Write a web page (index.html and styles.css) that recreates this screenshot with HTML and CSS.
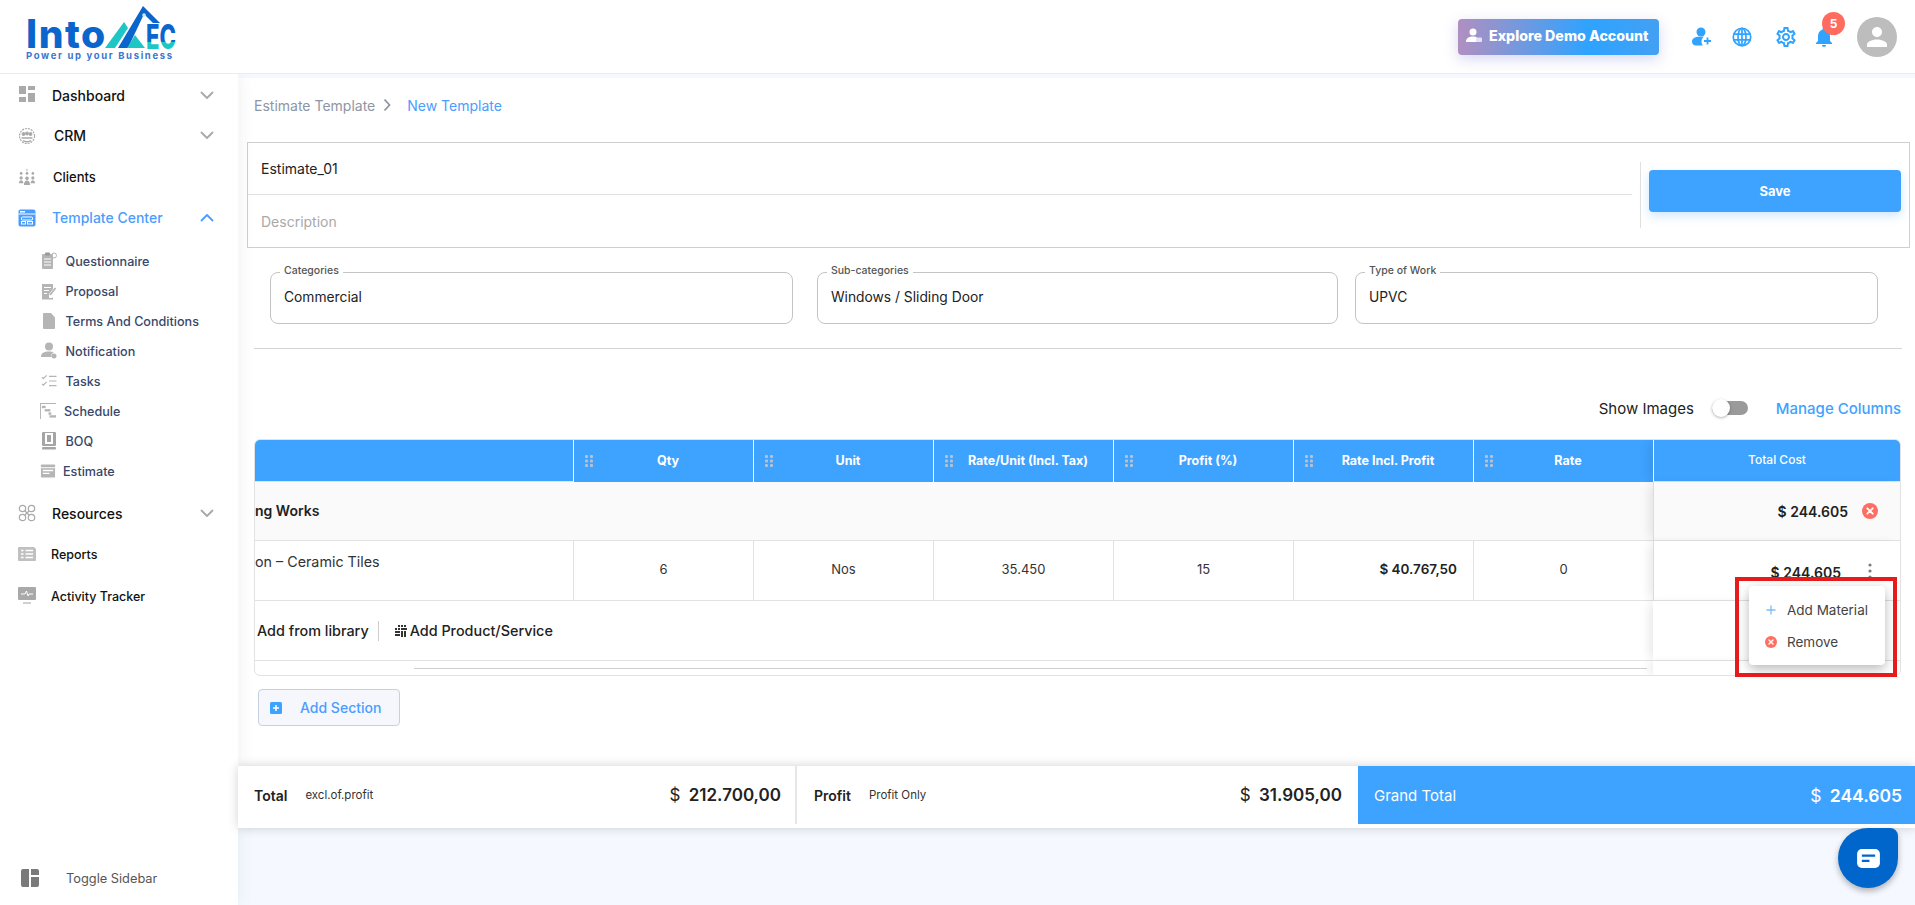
FILE: index.html
```html
<!DOCTYPE html>
<html lang="en">
<head>
<meta charset="utf-8">
<title>New Template</title>
<link rel="stylesheet" href="styles.css">
</head>
<body>
<svg class="sprite" aria-hidden="true">
  <defs>
    <symbol id="dots" viewBox="0 0 8 12"><g fill="#b9c2cc"><rect x="0" y="0" width="3" height="3" rx="1"/><rect x="5" y="0" width="3" height="3" rx="1"/><rect x="0" y="4.500" width="3" height="3" rx="1"/><rect x="5" y="4.500" width="3" height="3" rx="1"/><rect x="0" y="9" width="3" height="3" rx="1"/><rect x="5" y="9" width="3" height="3" rx="1"/></g></symbol>
    <symbol id="chev-down" viewBox="0 0 14 9"><path d="M1.500 1.500 7 7l5.500-5.500" fill="none" stroke="currentColor" stroke-width="1.800" stroke-linecap="round" stroke-linejoin="round"/></symbol>
    <symbol id="person" viewBox="0 0 24 24"><path d="M12 12c2.210 0 4-1.790 4-4s-1.790-4-4-4-4 1.790-4 4 1.790 4 4 4zm0 2c-2.670 0-8 1.340-8 4v2h16v-2c0-2.660-5.330-4-8-4z"/></symbol>
    <symbol id="xcircle" viewBox="0 0 16 16"><circle cx="8" cy="8" r="8" fill="#ff6f61"/><path d="M5.300 5.300l5.400 5.400M10.700 5.300l-5.400 5.400" stroke="#fff" stroke-width="1.800" stroke-linecap="round"/></symbol>
  </defs>
</svg>

<header class="topbar">
  <a class="logo">
    <div class="logo-word">
      <span class="logo-into">Into</span>
      <svg class="logo-mark" viewBox="0 0 76 45" width="76" height="45">
        <defs><linearGradient id="lg" gradientUnits="userSpaceOnUse" x1="0" y1="0" x2="0" y2="45"><stop offset="0.81" stop-color="#0a66cc"/><stop offset="0.82" stop-color="#1fc6c6"/></linearGradient></defs>
        <polygon points="5,43 24,17 28,23 15,43" fill="#1fc6c6"/>
        <polygon points="18,43 43,1 60,18 53,18 44,9 28,43" fill="#0a66cc"/>
        <polygon points="27,43 35,30 45,43" fill="#1fc6c6"/>
        <circle cx="44" cy="10" r="1.800" fill="#cfe3f7"/>
        <text x="46" y="44" class="logo-ec" fill="url(#lg)" textLength="30" lengthAdjust="spacingAndGlyphs">EC</text>
      </svg>
    </div>
    <div class="logo-tag">Power up your Business</div>
  </a>
  <div class="top-actions">
    <button class="demo-btn">
      <svg class="demo-icon" viewBox="0 0 18 18" width="18" height="18"><circle cx="8" cy="5" r="3.500" fill="#fff"/><path d="M1 15c0-4 3-5.500 7-5.500 1.800 0 3 .3 4 .9V15z" fill="#fff"/><rect x="11" y="10.500" width="6" height="4.500" rx="1" fill="#e6e0f4"/></svg>
      Explore Demo Account
    </button>
    <svg class="t-icon t-add" viewBox="0 0 20 20" width="20" height="21"><circle cx="9" cy="5.500" r="4.500"/><path d="M0 15c0-3 3-4.800 7-4.800h5c-1.500 1-2.500 2.500-2.500 4.800 0 1.800.7 3.100 1.500 4H4c-2.500 0-4-1.500-4-4z"/><path d="M15.500 11v7M12 14.500h7" fill="none" stroke="#2ea3ff" stroke-width="1.800"/></svg>
    <svg class="t-line t-globe" viewBox="0 0 24 24" width="20" height="20"><circle cx="12" cy="12" r="10.500"/><ellipse cx="12" cy="12" rx="4.800" ry="10.500"/><path d="M2 8.500h20M2 15.500h20M12 1.500v21"/></svg>
    <svg class="t-icon t-gear" viewBox="0 0 24 24" width="24" height="24"><path d="M19.430 12.980c.04-.32.07-.64.07-.98 0-.34-.03-.66-.07-.98l2.110-1.650c.19-.15.24-.42.12-.64l-2-3.460c-.09-.16-.26-.25-.44-.25-.06 0-.12.01-.17.03l-2.490 1c-.52-.4-1.080-.73-1.690-.98l-.38-2.650C14.460 2.180 14.250 2 14 2h-4c-.25 0-.46.18-.49.42l-.38 2.650c-.61.25-1.170.59-1.690.98l-2.490-1c-.06-.02-.12-.03-.18-.03-.17 0-.34.09-.43.25l-2 3.460c-.13.22-.07.49.12.64l2.110 1.650c-.04.32-.07.65-.07.98 0 .33.03.66.07.98l-2.110 1.650c-.19.15-.24.42-.12.64l2 3.460c.09.16.26.25.44.25.06 0 .12-.01.17-.03l2.490-1c.52.4 1.080.73 1.690.98l.38 2.650c.03.24.24.42.49.42h4c.25 0 .46-.18.49-.42l.38-2.650c.61-.25 1.170-.59 1.690-.98l2.490 1c.06.02.12.03.18.03.17 0 .34-.09.43-.25l2-3.460c.12-.22.07-.49-.12-.64l-2.110-1.650zm-1.980-1.710c.04.31.05.52.05.73 0 .21-.02.43-.05.73l-.14 1.130.89.7 1.080.84-.7 1.210-1.270-.51-1.040-.42-.9.68c-.43.32-.84.56-1.250.73l-1.060.43-.16 1.130-.2 1.350h-1.400l-.19-1.350-.16-1.130-1.060-.43c-.43-.18-.83-.41-1.230-.71l-.91-.7-1.060.43-1.270.51-.7-1.210 1.080-.84.89-.7-.14-1.130c-.03-.31-.05-.54-.05-.74s.02-.43.05-.73l.14-1.130-.89-.7-1.080-.84.7-1.210 1.270.51 1.040.42.9-.68c.43-.32.84-.56 1.250-.73l1.060-.43.16-1.130.2-1.350h1.390l.19 1.350.16 1.130 1.060.43c.43.18.83.41 1.230.71l.91.7 1.060-.43 1.270-.51.7 1.210-1.070.85-.89.7.14 1.130zM12 8c-2.210 0-4 1.790-4 4s1.790 4 4 4 4-1.790 4-4-1.790-4-4-4zm0 6c-1.100 0-2-.9-2-2s.9-2 2-2 2 .9 2 2-.9 2-2 2z"/></svg>
    <div class="bell">
      <svg class="t-icon" viewBox="0 0 24 24" width="24" height="24"><path d="M12 22c1.100 0 2-.9 2-2h-4c0 1.100.9 2 2 2zm6-6v-5c0-3.070-1.630-5.640-4.500-6.320V4c0-.83-.67-1.500-1.500-1.500s-1.500.67-1.500 1.500v.68C7.640 5.360 6 7.920 6 11v5l-2 2v1h16v-1l-2-2z"/></svg>
      <span class="badge">5</span>
    </div>
    <div class="avatar"><svg viewBox="0 0 24 24" width="30" height="30" fill="#fff"><use href="#person"/></svg></div>
  </div>
</header>

<div class="shell">
  <aside class="sidebar">
    <nav class="nav">
      <a class="nav-item">
        <svg class="nav-icon" viewBox="0 0 18 18"><rect x="1" y="0" width="7" height="8"/><rect x="10" y="0" width="7" height="4"/><rect x="1" y="11" width="7" height="5"/><rect x="10" y="7" width="7" height="9"/></svg>
        <span class="lbl">Dashboard</span>
        <svg class="chev"><use href="#chev-down"/></svg>
      </a>
      <a class="nav-item">
        <svg class="nav-icon outline" viewBox="0 0 18 18"><circle cx="9" cy="9" r="7.500" stroke-dasharray="2 1"/><circle cx="5.500" cy="7" r="1.300" fill="#a9a9a9"/><circle cx="9" cy="6.500" r="1.300" fill="#a9a9a9"/><circle cx="12.500" cy="7" r="1.300" fill="#a9a9a9"/><path d="M3.500 11h11M5 13.500c2 1.500 6 1.500 8 0" stroke-width="1.500"/></svg>
        <span class="lbl lbl-crm">CRM</span>
        <svg class="chev"><use href="#chev-down"/></svg>
      </a>
      <a class="nav-item item-clients">
        <svg class="nav-icon" viewBox="0 0 20 18"><g fill="#a9a9a9"><circle cx="3.500" cy="5" r="1.500"/><circle cx="10" cy="5" r="1.500"/><circle cx="16.500" cy="5" r="1.500"/><circle cx="3.500" cy="10" r="1.800"/><circle cx="10" cy="10.500" r="2"/><circle cx="16.500" cy="10" r="1.800"/><path d="M1 16c0-2 1-3.500 2.500-3.500S6 14 6 16zM6.500 18c0-3 1.500-5 3.500-5s3.500 2 3.500 5zM14 16c0-2 1-3.500 2.500-3.500S19 14 19 16z"/><rect x="9.500" y="0" width="1" height="2.500"/></g></svg>
        <span class="lbl lbl-clients">Clients</span>
      </a>
      <a class="nav-item active">
        <svg class="nav-icon" viewBox="0 0 18 18"><rect x="0.500" y="0.500" width="17" height="17" rx="2" fill="#4a9dff"/><rect x="2" y="2" width="5" height="1.500" fill="#fff"/><rect x="0.500" y="4.500" width="17" height="1" fill="#fff"/><rect x="3.500" y="8" width="11" height="3" rx="1" fill="none" stroke="#fff"/><rect x="3.500" y="12.500" width="4" height="2.500" fill="none" stroke="#fff"/><rect x="9.500" y="12.500" width="5" height="2.500" fill="none" stroke="#fff"/></svg>
        <span class="lbl">Template Center</span>
        <svg class="chev chev-up"><use href="#chev-down"/></svg>
      </a>
      <ul class="subnav">
        <li class="sub-item">
          <svg class="sub-icon" viewBox="0 0 16 18"><rect x="1" y="2" width="11" height="15" rx="1" fill="#b5b5b5"/><rect x="4" y="0.500" width="5" height="3" rx="1" fill="#999"/><circle cx="13" cy="3.500" r="2.500" fill="none" stroke="#b5b5b5"/><path d="M3 7h7M3 10h7M3 13h7" stroke="#fff"/></svg>
          <span class="sub-lbl">Questionnaire</span>
        </li>
        <li class="sub-item">
          <svg class="sub-icon" viewBox="0 0 16 18"><path d="M1 2h11v5l-4 5v4h3l1-1v2.500H1z" fill="#b5b5b5"/><path d="M3 5.500h7M3 8.500h5M3 11.500h3" stroke="#fff"/><path d="M9 13l5.500-7" stroke="#b5b5b5" stroke-width="1.800"/></svg>
          <span class="sub-lbl">Proposal</span>
        </li>
        <li class="sub-item">
          <svg class="sub-icon" viewBox="0 0 16 18"><path d="M3 1h7l4 4.500V16a1 1 0 0 1-1 1H3a1 1 0 0 1-1-1V2a1 1 0 0 1 1-1z" fill="#b5b5b5"/></svg>
          <span class="sub-lbl">Terms And Conditions</span>
        </li>
        <li class="sub-item">
          <svg class="sub-icon" viewBox="0 0 16 18"><circle cx="8" cy="4.500" r="4" fill="#b5b5b5"/><path d="M0 15c0-4 3-5.500 8-5.500 2.500 0 4 .4 5 1.100-2 .6-3 2-2.600 4.400z" fill="#b5b5b5"/><circle cx="13" cy="14" r="2.500" fill="#b5b5b5"/></svg>
          <span class="sub-lbl">Notification</span>
        </li>
        <li class="sub-item">
          <svg class="sub-icon sub-outline" viewBox="0 0 17 14"><path d="M1 3l1.500 1.500L6 1M1 10l1.500 1.500L6 8M8.500 2h8M8.500 7h8M8.500 12h8"/></svg>
          <span class="sub-lbl">Tasks</span>
        </li>
        <li class="sub-item item-schedule">
          <svg class="sub-icon" viewBox="0 0 17 17" fill="#b5b5b5"><path d="M0 0h17v1H1v16H0z"/><rect x="2" y="3" width="4" height="2.500"/><rect x="5" y="6.500" width="6" height="2.500"/><rect x="9" y="10" width="3" height="2.500"/><rect x="10" y="13" width="7" height="2.500"/></svg>
          <span class="sub-lbl">Schedule</span>
        </li>
        <li class="sub-item item-boq">
          <svg class="sub-icon" viewBox="0 0 16 18"><rect x="1" y="0" width="14" height="14" rx="1" fill="#a5a5a5"/><rect x="4" y="1" width="8" height="11" fill="#fff"/><rect x="6" y="3" width="4" height="7" fill="#a5a5a5"/><rect x="1" y="15" width="14" height="2.500" rx="1" fill="#a5a5a5"/></svg>
          <span class="sub-lbl">BOQ</span>
        </li>
        <li class="sub-item item-estimate">
          <svg class="sub-icon" viewBox="0 0 17 16"><rect x="1" y="1" width="15" height="14" rx="1" fill="#b5b5b5"/><path d="M1 4.500h15" stroke="#fff" stroke-width="1"/><path d="M3 7.500h11M3 10.500h7" stroke="#fff" stroke-width="1.500"/></svg>
          <span class="sub-lbl">Estimate</span>
        </li>
      </ul>
      <a class="nav-item item-resources">
        <svg class="nav-icon outline" viewBox="0 0 18 18"><circle cx="4.500" cy="4.500" r="3.200"/><circle cx="13.500" cy="4.500" r="3.200"/><circle cx="4.500" cy="13.500" r="3.200"/><circle cx="13.500" cy="13.500" r="3.200"/><path d="M7 7l4 4M11 7l-4 4"/></svg>
        <span class="lbl">Resources</span>
        <svg class="chev"><use href="#chev-down"/></svg>
      </a>
      <a class="nav-item item-reports">
        <svg class="nav-icon" viewBox="0 0 18 14"><path d="M1 0h15l2 2v11a1 1 0 0 1-1 1H1a1 1 0 0 1-1-1V1a1 1 0 0 1 1-1z" fill="#c0c0c0"/><path d="M3 3.500h2.500M3 7h2.500M3 10.500h2.500M7.500 3.500H15M7.500 7H15M7.500 10.500H15" stroke="#fff" stroke-width="1.500"/></svg>
        <span class="lbl lbl-small">Reports</span>
      </a>
      <a class="nav-item item-tracker">
        <svg class="nav-icon" viewBox="0 0 18 18"><rect x="0" y="0" width="18" height="13" rx="1" fill="#a9a9a9"/><path d="M3 7h4l1.500-3 1.500 5 1-2h4" fill="none" stroke="#fff" stroke-width="1"/><rect x="5" y="15" width="8" height="2" fill="#d0d0d0"/></svg>
        <span class="lbl lbl-small">Activity Tracker</span>
      </a>
    </nav>
    <a class="toggle">
      <svg class="toggle-icon" viewBox="0 0 18 18"><path d="M2 0h6v18H2a2 2 0 0 1-2-2V2a2 2 0 0 1 2-2zM10 0h6a2 2 0 0 1 2 2v4h-8zM10 8h8v8a2 2 0 0 1-2 2h-6z" fill="#7a7a7a"/></svg>
      <span>Toggle Sidebar</span>
    </a>
  </aside>

  <main class="main">
    <section class="panel">
      <div class="crumbs">
        <span class="crumb">Estimate Template</span>
        <svg class="crumb-sep" viewBox="0 0 8 14" width="8" height="14"><path d="M1.500 1.500 6.500 7l-5 5.500" fill="none" stroke="#8d96a5" stroke-width="1.800"/></svg>
        <span class="crumb-now">New Template</span>
      </div>

      <div class="form-box">
        <div class="form-fields">
          <div class="f-title">Estimate_01</div>
          <div class="f-desc">Description</div>
        </div>
        <div class="form-action">
          <button class="save-btn">Save</button>
        </div>
      </div>

      <div class="fields">
        <div class="field f-cat"><span class="legend">Categories</span><span>Commercial</span></div>
        <div class="field f-sub"><span class="legend">Sub-categories</span><span>Windows / Sliding Door</span></div>
        <div class="field f-type"><span class="legend">Type of Work</span><span>UPVC</span></div>
      </div>

      <hr class="rule">

      <div class="toolbar">
        <span class="show-lbl">Show Images</span>
        <span class="switch"><span class="knob"></span></span>
        <a class="manage">Manage Columns</a>
      </div>

      <div class="table-wrap">
        <div class="grid">
          <div class="th th-first"></div>
          <div class="th"><svg class="dots"><use href="#dots"/></svg><span>Qty</span></div>
          <div class="th"><svg class="dots"><use href="#dots"/></svg><span>Unit</span></div>
          <div class="th"><svg class="dots"><use href="#dots"/></svg><span>Rate/Unit (Incl. Tax)</span></div>
          <div class="th"><svg class="dots"><use href="#dots"/></svg><span>Profit (%)</span></div>
          <div class="th"><svg class="dots"><use href="#dots"/></svg><span>Rate Incl. Profit</span></div>
          <div class="th"><svg class="dots"><use href="#dots"/></svg><span>Rate</span></div>
          <div class="th-total">Total Cost</div>

          <div class="sec-name">ng Works</div>
          <div class="total-cell sec-total"><b class="money">$ 244.605</b><svg class="x-icon"><use href="#xcircle"/></svg></div>

          <div class="td td-name"><span>on – Ceramic Tiles</span></div>
          <div class="td">6</div>
          <div class="td">Nos</div>
          <div class="td">35.450</div>
          <div class="td">15</div>
          <div class="td td-rate"><b>$ 40.767,50</b></div>
          <div class="td">0</div>
          <div class="total-cell item-total"><b class="money">$ 244.605</b><svg class="kebab" viewBox="0 0 4 16" width="4" height="16"><g fill="#7d7d7d"><circle cx="2" cy="2" r="1.600"/><circle cx="2" cy="8" r="1.600"/><circle cx="2" cy="14" r="1.600"/></g></svg></div>

          <div class="add-row">
            <span class="add-link">Add from library</span>
            <span class="add-sep"></span>
            <svg class="add-ico" viewBox="0 0 12 12" width="12" height="12"><g fill="#333"><rect x="3" y="0" width="2" height="2"/><rect x="6" y="0" width="2" height="2"/><rect x="9" y="0" width="2" height="2"/><rect x="0" y="3" width="2" height="2"/><rect x="3" y="3" width="2" height="2"/><rect x="6" y="3" width="6" height="2"/><rect x="0" y="6" width="5" height="2"/><rect x="6" y="6" width="2" height="6"/><rect x="9" y="6" width="2" height="6"/><rect x="0" y="9" width="5" height="2"/></g></svg>
            <span class="add-link">Add Product/Service</span>
          </div>
          <div class="total-cell total-plain"></div>

          <div class="scroll-row"><span class="scroll-thumb"></span></div>
          <div class="total-cell total-plain total-last"></div>
        </div>

        <div class="menu">
          <div class="menu-item"><svg class="menu-ico" viewBox="0 0 12 12" width="12" height="12"><path d="M6 1.500v9M1.500 6h9" stroke="#7cbcf5" stroke-width="1.300"/></svg><span>Add Material</span></div>
          <div class="menu-item"><svg class="menu-ico" viewBox="0 0 16 16" width="12" height="12"><use href="#xcircle"/></svg><span>Remove</span></div>
        </div>
        <div class="highlight"></div>
      </div>

      <button class="add-section">
        <svg viewBox="0 0 12 12" width="12" height="12"><rect width="12" height="12" rx="1.500" fill="#3ea2ff"/><path d="M6 3v6M3 6h6" stroke="#fff" stroke-width="1.500"/></svg>
        <span>Add Section</span>
      </button>

      <div class="summary">
        <div class="sum sum-total">
          <span class="sum-title">Total</span>
          <span class="sum-note">excl.of.profit</span>
          <span class="sum-val"><i>$</i> 212.700,00</span>
        </div>
        <div class="sum sum-profit">
          <span class="sum-title">Profit</span>
          <span class="sum-note">Profit Only</span>
          <span class="sum-val"><i>$</i> 31.905,00</span>
        </div>
        <div class="sum sum-grand">
          <span class="grand-lbl">Grand Total</span>
          <span class="sum-val"><i>$</i> 244.605</span>
        </div>
      </div>
    </section>
    <button class="chat" aria-label="Chat">
      <svg viewBox="0 0 24 20" width="23" height="19"><rect x="0" y="0" width="24" height="20" rx="5" fill="#fff"/><path d="M5 7h14M5 12.500h8" stroke="#0066cc" stroke-width="2.400"/></svg>
    </button>
  </main>
</div>
</body>
</html>
```
FILE: styles.css
```css
* { box-sizing: border-box; }
html, body { margin: 0; height: 905px; overflow: hidden; }
body {
  font-family: Inter, "Noto Sans", "Liberation Sans", sans-serif;
  font-size: 13px;
  color: #2b2b2b;
  background: #f5f9ff;
  display: flex;
  flex-direction: column;
}
.sprite { width: 0; height: 0; position: absolute; }
button { font-family: inherit; border: 0; cursor: pointer; }

/* header */
.topbar {
  height: 74px;
  flex: none;
  background: #fff;
  border-bottom: 1px solid #e9edf3;
  display: flex;
  align-items: center;
  justify-content: space-between;
  position: relative;
  z-index: 3;
}
.logo { margin-left: 26px; align-self: flex-start; margin-top: 5px; display: block; width: 150px; }
.logo-word { display: flex; align-items: flex-end; height: 45px; }
.logo-into { width: 74px; flex: none; font-size: 39px; line-height: 32px; font-weight: 800; color: #0a66cc; letter-spacing: 1.500px; white-space: nowrap; }
.logo-mark { flex: none; overflow: visible; }
.logo-ec { font-family: Inter, sans-serif; font-size: 34px; font-weight: 800; }
.logo-tag { font-size: 9.500px; font-weight: 700; letter-spacing: 1.650px; color: #3a76d0; line-height: 11px; white-space: nowrap; }
.top-actions { display: flex; align-items: center; padding-right: 18px; }
.demo-btn {
  width: 201px; height: 36px;
  border-radius: 4px;
  background: linear-gradient(90deg, #b18fc0 0%, #2ea3ff 65%, #43a0f3 100%);
  box-shadow: 0 4px 14px rgba(105, 110, 210, .28);
  color: #fff;
  font-size: 14.200px;
  font-weight: 800;
  display: flex;
  align-items: center;
  gap: 6px;
  padding: 0 0 2px 7px;
  white-space: nowrap;
  margin-right: 33px;
}
.t-icon { fill: #2ea3ff; display: block; }
.t-line { fill: none; stroke: #2ea3ff; stroke-width: 2; display: block; }
.t-add { margin-right: 20px; }
.t-globe { margin-right: 22px; }
.t-gear { margin-right: 14px; }
.bell { position: relative; width: 24px; height: 24px; margin-right: 21px; }
.badge {
  position: absolute; left: 10px; top: -13px;
  width: 23px; height: 23px; border-radius: 50%;
  background: #ff6b5e; color: #fff;
  font-size: 12px; font-weight: 700;
  display: flex; align-items: center; justify-content: center;
}
.avatar {
  width: 40px; height: 40px; border-radius: 50%;
  background: #bdbdbd;
  display: flex; align-items: center; justify-content: center;
}

/* shell */
.shell { flex: 1; display: flex; min-height: 0; }
.sidebar {
  width: 238px; flex: none;
  background: #fff;
  display: flex; flex-direction: column;
  box-shadow: 2px 0 14px rgba(40, 60, 90, .07);
  position: relative; z-index: 2;
}
.nav { padding-top: 1px; display: flex; flex-direction: column; }
.nav-item {
  height: 40.500px;
  display: flex; align-items: center;
  padding: 0 24px 0 18px;
  color: #111;
  font-weight: 500;
  font-size: 14px;
}
.nav-icon { width: 18px; height: 18px; flex: none; fill: #aaa; margin-right: 16px; }
.outline { fill: none; stroke: #a9a9a9; stroke-width: 1.200; }
.lbl { flex: 1; white-space: nowrap; }
.lbl-crm { padding-left: 2px; }
.lbl-clients { padding-left: 1px; font-size: 13px; }
.lbl-small { font-size: 12.500px; margin-left: -1px; }
.item-clients { margin-top: 1px; }
.chev { width: 14px; height: 9px; color: #a8a8a8; flex: none; }
.active { color: #4a9dff; }
.active .chev { color: #4a9dff; }
.chev-up { transform: rotate(180deg); }
.subnav { list-style: none; margin: 8px 0 0; padding: 0; }
.sub-item {
  height: 30px;
  display: flex; align-items: center;
  padding-left: 41px;
  font-size: 12.600px;
  font-weight: 500;
  color: #37476a;
}
.sub-icon { width: 16px; height: 18px; margin-right: 8.500px; flex: none; }
.sub-outline { fill: none; stroke: #b5b5b5; stroke-width: 1.300; }
.item-schedule, .item-estimate { padding-left: 40px; }
.item-schedule .sub-icon { margin-right: 8px; }
.item-estimate .sub-icon { margin-right: 7px; }
.item-resources { margin-top: 7px; height: 40px; }
.item-reports { height: 42px; }
.item-tracker { height: 42px; }
.toggle {
  margin-top: auto;
  height: 50px;
  padding: 0 0 4px 21px;
  display: flex; align-items: center;
  color: #555;
  font-size: 12.800px;
}
.toggle-icon { width: 18px; height: 18px; margin-right: 27px; }

/* main */
.main { flex: 1; min-width: 0; position: relative; padding-top: 4px; }
.panel { background: #fff; padding: 15px 0 0 9px; height: 750px; display: flex; flex-direction: column; }
.crumbs { height: 24px; margin-left: 7px; display: flex; align-items: center; font-size: 14px; }
.crumb { color: #8d96a5; }
.crumb-sep { margin: 0 16px 0 8px; }
.crumb-now { color: #4a9dff; }
.form-box {
  margin: 25px 5px 0 0;
  height: 106px; flex: none;
  border: 1px solid #cfcfcf;
  display: flex;
}
.form-fields { width: 1384px; flex: none; display: flex; flex-direction: column; }
.f-title { height: 52px; border-bottom: 1px solid #e2e2e2; padding-left: 13px; display: flex; align-items: center; font-size: 14px; color: #222; }
.f-desc { flex: 1; padding: 0 0 0 13px; display: flex; align-items: center; color: #a9a9a9; font-size: 14px; }
.form-action { flex: 1; padding: 0 8px 0 0; margin: 0 0 0 8px; display: flex; align-items: center; }
.form-action::before { content: ""; width: 1px; height: 66px; background: #e0e0e0; margin-right: 8px; flex: none; }
.save-btn {
  flex: 1; height: 42px; border-radius: 4px;
  margin-bottom: 8px;
  background: #3ea2ff; color: #fff;
  font-size: 13px; font-weight: 700;
  box-shadow: 0 4px 10px rgba(62, 162, 255, .25);
}
.fields { margin: 24px 0 0 23px; display: flex; flex: none; }
.field {
  height: 52px; border: 1px solid #c4c4c4; border-radius: 8px;
  padding: 0 0 2px 13px;
  display: flex; align-items: center;
  font-size: 13.800px; color: #222;
  position: relative;
}
.f-cat { width: 523px; margin-right: 24px; }
.f-sub { width: 521px; margin-right: 17px; }
.f-type { width: 523px; }
.legend {
  position: absolute; left: 9px; top: -9px;
  background: #fff; padding: 0 4px;
  font-size: 10.500px; line-height: 14px; font-weight: 500; color: #555;
}
.rule { margin: 24px 13px 0 7px; height: 1px; border: 0; background: #d4d4d4; flex: none; }
.toolbar {
  margin: 47px 14px 0 0; height: 24px; flex: none;
  display: flex; align-items: center; justify-content: flex-end;
  font-size: 15px;
}
.show-lbl { color: #222; margin-right: 18px; }
.switch { width: 36px; height: 14px; border-radius: 7px; background: #9a9a9a; position: relative; margin-right: 28px; }
.knob { position: absolute; left: 0; top: -2px; width: 18px; height: 18px; border-radius: 50%; background: #fff; box-shadow: 0 1px 3px rgba(0,0,0,.3); }
.manage { color: #3ea2ff; font-weight: 500; font-size: 15px; }

/* table */
.table-wrap { margin: 19px 14px 0 7px; height: 237px; flex: none; position: relative; }
.grid {
  height: 100%;
  display: grid;
  grid-template-columns: 318px repeat(6, 180px) 1fr;
  grid-template-rows: 42px 59px 60px 60px 16px;
  border: 1px solid #e2e2e2;
  border-radius: 6px;
  overflow: hidden;
}
.th {
  background: #3ea2ff; color: #fff;
  border-left: 1px solid #fff;
  display: flex; align-items: center;
  font-size: 12.500px; font-weight: 700;
  position: relative;
  padding: 0 0 2px 9px;
  justify-content: center;
}
.th-first { border-left: 0; padding: 0; border-bottom: 1px solid #e2e2e2; }
.dots { position: absolute; left: 11px; top: 15px; width: 8px; height: 12px; }
.th-total {
  background: #3ea2ff; color: #fff;
  border-left: 1px solid #fff; border-bottom: 1px solid #e2e2e2;
  display: flex; align-items: center; justify-content: center;
  font-size: 12px; font-weight: 500;
  padding-bottom: 2px;
  position: relative; z-index: 1;
  box-shadow: -6px 0 10px -3px rgba(0,0,0,.1);
}
.sec-name {
  grid-column: 1 / span 7;
  background: #fafafa;
  border-bottom: 1px solid #e2e2e2;
  display: flex; align-items: center;
  padding-bottom: 1px;
  font-size: 14px; font-weight: 600; color: #222;
  white-space: nowrap;
}
.total-cell {
  border-left: 1px solid #dcdcdc;
  border-bottom: 1px solid #e2e2e2;
  background: #fff;
  display: flex; align-items: center; justify-content: flex-end;
  position: relative; z-index: 1;
  box-shadow: -6px 0 10px -3px rgba(0,0,0,.1);
}
.total-plain { border-left: 1px solid transparent; }
.total-last { border-bottom: 0; }
.sec-total { background: #fafafa; padding-right: 22px; }
.item-total { padding: 3px 29px 0 0; }
.money { font-size: 14px; font-weight: 600; color: #222; }
.x-icon { width: 16px; height: 16px; margin-left: 14px; }
.kebab { margin: -2px -1px 0 27px; }
.td {
  border-left: 1px solid #e2e2e2; border-bottom: 1px solid #e2e2e2;
  display: flex; align-items: center; justify-content: center;
  padding-bottom: 3px;
  font-size: 13px; color: #333;
}
.td-name { border-left: 0; justify-content: flex-start; align-items: flex-start; padding: 12px 0 0; font-size: 14.300px; }
.td-rate { justify-content: flex-end; padding-right: 16px; }
.td-rate b { font-weight: 600; color: #222; font-size: 13.500px; }
.add-row {
  grid-column: 1 / span 7;
  border-bottom: 1px solid #e2e2e2;
  display: flex; align-items: center;
  padding-left: 2px;
  font-size: 14.400px; font-weight: 500; color: #222;
  white-space: nowrap;
}
.add-sep { width: 1px; height: 20px; background: #ccc; margin: 0 16px 0 9px; }
.add-ico { margin-right: 3px; }
.scroll-row { grid-column: 1 / span 7; padding: 7px 6px 0 159px; }
.scroll-thumb { display: block; height: 1px; background: #cfcfcf; }

/* row menu */
.menu {
  position: absolute; right: 16px; top: 147px;
  width: 136px; height: 79px;
  background: #fff; border-radius: 4px;
  box-shadow: 0 4px 12px rgba(0,0,0,.28);
  padding-top: 8px;
  z-index: 5;
}
.menu-item { height: 32px; display: flex; align-items: center; padding-left: 16px; font-size: 13.500px; color: #444; }
.menu-ico { margin-right: 10px; flex: none; }
.highlight {
  position: absolute; right: 4px; top: 138px;
  width: 162px; height: 100px;
  border: 4px solid #e61c1c;
  z-index: 6;
}

.add-section {
  margin: 13px 0 0 11px; width: 142px; height: 37px; flex: none;
  background: #f5f7fc; border: 1px solid #c7d0e0; border-radius: 4px;
  display: flex; align-items: center;
  padding: 0 0 0 11px;
  color: #4a9dff; font-size: 14px; font-weight: 500;
}
.add-section span { margin-left: 18px; }

/* summary */
.summary {
  margin: 40px 0 0 -9px; height: 62px; flex: none;
  padding-bottom: 4px;
  background: #fff;
  display: flex;
  box-shadow: 0 0 10px rgba(0,0,0,.18);
  position: relative; z-index: 2;
}
.sum { display: flex; align-items: center; padding-top: 1px; }
.sum-total { width: 559px; padding: 0 14px 0 16px; border-right: 2px solid #e6e6e6; }
.sum-profit { width: 561px; padding: 0 16px 0 17px; }
.sum-grand { flex: 1; background: #3ea2ff; color: #fff; padding: 0 13px 0 16px; justify-content: space-between; }
.sum-title { font-size: 14px; font-weight: 600; color: #222; }
.sum-note { font-size: 11.500px; color: #333; margin-left: 18px; }
.sum-val { margin-left: auto; font-size: 17px; font-weight: 600; color: #222; white-space: nowrap; }
.sum-val i { font-style: normal; font-weight: 400; margin-right: 4px; }
.sum-grand .sum-val { color: #fff; margin-left: 0; font-size: 17.500px; }
.grand-lbl { font-size: 15px; }

.chat {
  position: absolute; right: 17px; bottom: 17px;
  width: 60px; height: 60px;
  border-radius: 50% 8px 50% 50%;
  background: #0066cc;
  box-shadow: 0 3px 6px rgba(0,0,0,.3);
  display: flex; align-items: center; justify-content: center;
  z-index: 4;
  padding: 0;
}
```
